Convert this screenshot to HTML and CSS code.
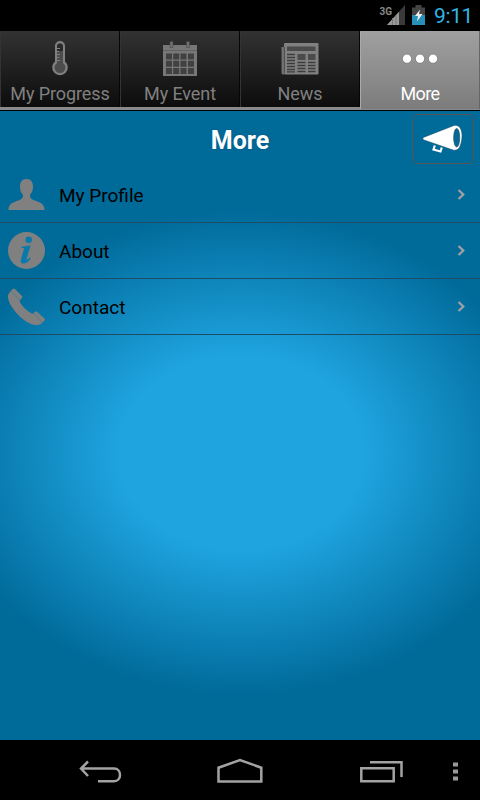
FILE: index.html
```html
<!DOCTYPE html>
<html lang="en">
<head>
	<meta charset="UTF-8">
	<title>More</title>
	<link rel="stylesheet" href="styles.css">
</head>

<body>
<div class="statusbar">
	<span class="network">3G</span>
	<svg class="signal" width="18" height="20" viewBox="0 0 18 20">
		<path d="M0 20L18 0V20z" fill="#3a3a3a"/>
		<path d="M0 20L12 6.700V20z" fill="#999"/>
		<path d="M5.500 13V20M9 10V20" stroke="#777" fill="none"/>
	</svg>
	<svg class="battery" width="13" height="20" viewBox="0 0 13 20">
		<path d="M0 2.500H3.500V0H9.500V2.500H13V20H0z" fill="#444"/>
		<path d="M0 10H13V20H0z" fill="#2790b8"/>
		<path d="M8 4.500L3 11H6L5 16.500L10.500 9H7z" fill="#eee"/>
	</svg>
	<span class="clock">9:11</span>
</div>
<div class="tabs">
	<a class="tab">
		<svg width="40" height="40" viewBox="0 0 40 40">
			<path d="M15 7a5 5 0 0 1 10 0V22.500a7.800 7.800 0 1 1-10 0z" fill="#808080"/>
			<path d="M17 7.500a3 3 0 0 1 6 0V24a5.500 5.500 0 1 1-6 0z" fill="#4c4c4c"/>
			<path d="M17 7.500a3 3 0 0 1 6 0V12H17z" fill="#292929"/>
			<path d="M16 9.500H20M16 12.500H19M16 15.500H20M16 18.500H19M16 21.500H20" stroke="#808080"/>
		</svg>
		<span>My Progress</span>
	</a>
	<a class="tab">
		<svg width="40" height="40" viewBox="0 0 40 40">
			<path d="M3 6H37V37H3z" fill="#777"/>
			<path d="M3 11.500H37" stroke="#626262"/>
			<path d="M10 2.500h3v6h-3zM26.500 2.500h3v6h-3z" fill="#707070" stroke="#444" stroke-width=".5"/>
			<path d="M6 14.500h6v6H6zM13.200 14.500h6v6h-6zM20.500 14.500h6v6h-6zM28 14.500h6v6h-6zM6 21.700h6v6H6zM13.200 21.700h6v6h-6zM20.500 21.700h6v6h-6zM28 21.700h6v6h-6zM6 28.900h6v6H6zM13.200 28.900h6v6h-6zM20.500 28.900h6v6h-6zM28 28.900h6v6h-6z" fill="#414141"/>
		</svg>
		<span>My Event</span>
	</a>
	<a class="tab">
		<svg width="40" height="40" viewBox="0 0 40 40">
			<path d="M1.500 8H4V35.500H3a1.500 1.500 0 0 1-1.500-1.500z" fill="#707070"/>
			<path d="M4 5a1 1 0 0 1 1-1H37.500a1 1 0 0 1 1 1V34.500a1 1 0 0 1-1 1H5L4 34.500z" fill="#808080"/>
			<path d="M7 7.500H35.500V12H7zM17.500 15H25.500V21H17.500zM28 15H35.500V21H28z" fill="#4b4b4b"/>
			<path d="M4.500 8V34" stroke="#505050"/>
			<path d="M7 15.500H15M7 18.500H15M7 21.500H15M7 24.500H15M7 27.500H15M7 30.500H15M7 32.800H15M17.500 23.500H25.500M17.500 26.500H25.500M17.500 29.500H25.500M17.500 32.500H25.500M28 23.500H35.500M28 26.500H35.500M28 29.500H35.500M28 32.500H35.500" stroke="#3c3c3c" stroke-width="1.300"/>
		</svg>
		<span>News</span>
	</a>
	<a class="tab active">
		<svg width="40" height="40" viewBox="0 0 40 40">
			<g fill="#fff" stroke="#777" stroke-width=".8">
				<circle cx="7" cy="19.700" r="4.600"/>
				<circle cx="20" cy="19.700" r="4.600"/>
				<circle cx="33" cy="19.700" r="4.600"/>
			</g>
		</svg>
		<span>More</span>
	</a>
</div>
<div class="content">
	<div class="header">
		<h1>More</h1>
		<a class="shout">
			<svg width="44" height="34" viewBox="0 0 44 34">
				<path d="M4 15.200L34 3.500C41.500 2 43 12 41.500 19C40 27 37 29 33 28L4 18C2.500 17.500 2.500 15.800 4 15.200z" fill="#fff" stroke="#0d4b68" stroke-width=".5"/>
				<ellipse cx="36.700" cy="15.700" rx="3" ry="9.300" fill="#006a99" stroke="#234a5c" stroke-width=".7"/>
				<path d="M14.800 23.500L13.500 27.500L20.500 29.500L21.800 25.500" fill="none" stroke="#fff" stroke-width="2.200"/>
			</svg>
		</a>
	</div>
	<ul class="list">
		<li>
			<svg class="icon" width="38" height="38" viewBox="0 0 38 38">
				<path d="M18.500 3C23 3 25 6 25 10.500C25 15 23.500 17 22 19C22 22 23 23 26 24.200C33 26.500 36.500 28 36.500 34H.5C.5 28 4 26.500 11 24.200C14 23 15 22 15 19C13.500 17 12 15 12 10.500C12 6 14 3 18.500 3z"/>
			</svg>
			<span>My Profile</span>
			<svg class="arrow" width="10" height="14" viewBox="0 0 10 14"><path d="M1.500 2L6.300 6.500L1.500 11"/></svg>
		</li>
		<li>
			<svg class="icon" width="38" height="38" viewBox="0 0 38 38">
				<circle cx="18.500" cy="18.500" r="18.500"/>
				<g class="hole">
					<circle cx="20.700" cy="7.800" r="3.200"/>
					<path d="M13.500 14.700L22.500 13.500L18.600 27C18.200 28.500 19.200 28.200 21.600 25.500L22.800 26.500C20 30.500 17.500 32 14.500 31.500C12.500 31 12.500 29 13 27.200L16 17C16.300 15.900 15.500 16 13.300 16.100z"/>
				</g>
			</svg>
			<span>About</span>
			<svg class="arrow" width="10" height="14" viewBox="0 0 10 14"><path d="M1.500 2L6.300 6.500L1.500 11"/></svg>
		</li>
		<li>
			<svg class="icon" width="38" height="38" viewBox="0 0 38 38">
				<path d="M2 4L5 .7Q6 .2 7 1L14.200 8.200Q14.800 9.200 14 10L11.500 12.500C12 16.500 21 25.500 25 25.700L27 23.700Q28 23 29 23.700L36.500 30.500Q37.200 31.500 36.500 32.500L33 36C29 38.500 22 37 14 30.500C5 22.500 -1.500 12.500 .3 6.500Q.8 5 2 4z"/>
				<path class="seam" d="M3 3.500L12 12.500M25.500 25L34 34.500"/>
			</svg>
			<span>Contact</span>
			<svg class="arrow" width="10" height="14" viewBox="0 0 10 14"><path d="M1.500 2L6.300 6.500L1.500 11"/></svg>
		</li>
	</ul>
</div>
<div class="navbar">
	<svg width="480" height="60" viewBox="0 0 480 60">
		<g fill="none" stroke="#a3a3a3" stroke-width="2.500">
			<path d="M81 28.500H114C122 28.500 122 41.300 114 41.300H98M88 21.500L81 28.500L88 36"/>
			<path d="M218.500 41.500V27.700L240 20L261.300 27.700V41.500z"/>
			<path d="M361.300 28.300H393.700V41.300H361.300zM370 22.300H401.500V37"/>
		</g>
		<path d="M453 22.500h5v4h-5zM453 29.500h5v4h-5zM453 36.500h5v4h-5z" fill="#999"/>
	</svg>
</div>
</body>
</html>
```

FILE: styles.css
```css
html, body {
	margin: 0;
	padding: 0;
	background: #000;
	font-family: Roboto, "Liberation Sans", sans-serif;
}
body {
	width: 480px;
	height: 800px;
	overflow: hidden;
}
svg {
	display: block;
}
.statusbar {
	display: flex;
	justify-content: flex-end;
	height: 31px;
	padding-right: 7px;
}
.network {
	margin: 6px -5px 0 0;
	color: #888;
	font-size: 10px;
	font-weight: bold;
	line-height: 12px;
}
.signal {
	margin-top: 5px;
}
.battery {
	margin: 5px 9px 0 7px;
}
.clock {
	color: #33b5e5;
	font-size: 21px;
	letter-spacing: -.4px;
	line-height: 33px;
}
.tabs {
	display: flex;
	height: 76px;
	border-bottom: 3px solid #8a8a8a;
}
.tab {
	box-sizing: border-box;
	width: 120px;
	height: 76px;
	padding-top: 8px;
	border-left: 1px solid #333;
	border-right: 1px solid #060606;
	background: linear-gradient(#323232, #0c0c0c);
	color: #808080;
	font-size: 18px;
	letter-spacing: -.1px;
	line-height: 20px;
	text-align: center;
	white-space: nowrap;
}
.tab svg {
	margin: 0 auto;
}
.tab span {
	display: block;
	margin-top: 5px;
}
.active {
	height: 78px;
	border-color: #aaa #666 #777 #aaa;
	background: linear-gradient(#a0a0a0, #7c7c7c);
	color: #fff;
	letter-spacing: -.6px;
}
.content {
	height: 629px;
	border-top: 1px solid #000;
	background: radial-gradient(305px 243px at 241px 342px, #1fa4e0 40%, #006a99 100%);
}
.header {
	display: grid;
	grid-template-columns: 1fr auto 1fr;
	height: 55px;
}
h1 {
	grid-column: 2;
	margin: 0;
	color: #fff;
	font-size: 25px;
	line-height: 59px;
	text-shadow: 0 0 2px #00527a;
}
.shout {
	box-sizing: border-box;
	justify-self: end;
	width: 62px;
	height: 50px;
	margin: 3px 6px 0 0;
	padding: 7px 0 0 7px;
	border: 1px solid #555;
	border-radius: 5px;
}
.list {
	margin: 0;
	padding: 1px 0 0;
	list-style: none;
}
.list li {
	display: flex;
	align-items: center;
	height: 55px;
	padding: 0 13px 0 8px;
	border-bottom: 1px solid #1c4c66;
	color: #000;
	font-size: 19px;
}
.list span {
	flex: 1;
	margin-left: 13px;
	padding-top: 1px;
}
.icon {
	fill: #808080;
}
.hole {
	fill: #0879aa;
}
.seam {
	fill: none;
	stroke: #4c7b91;
	stroke-width: .8;
}
.arrow {
	fill: none;
	stroke: #a2a2a2;
	stroke-width: 2.2;
}
.navbar {
	height: 60px;
}
```
